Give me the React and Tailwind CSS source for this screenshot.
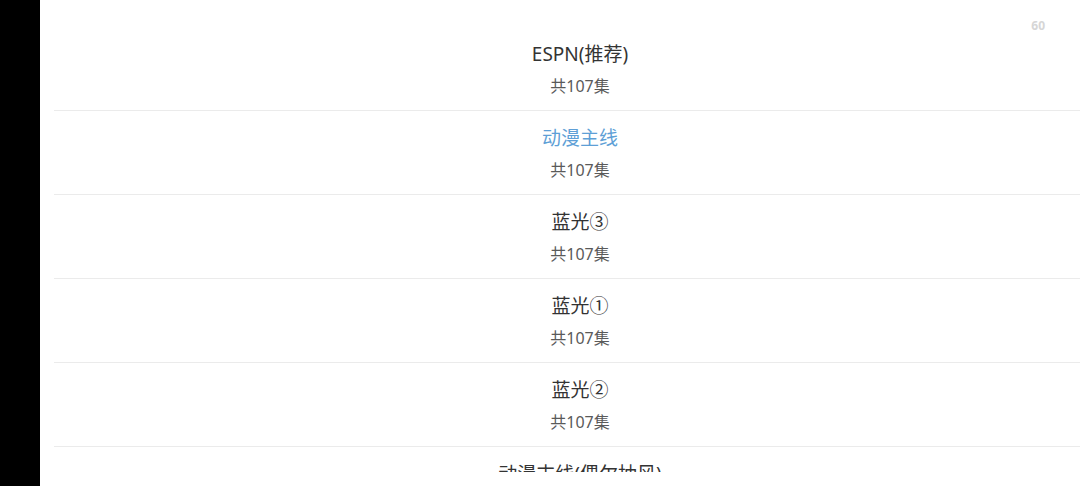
import React from "react";

const rows = [
  { title: "ESPN(推荐)", active: false },
  { title: "动漫主线", active: true },
  { title: "蓝光③", active: false },
  { title: "蓝光①", active: false },
  { title: "蓝光②", active: false },
  { title: "动漫支线(偶尔抽风)", active: false },
];

export default function App() {
  return (
    <div
      className="flex h-[486px] w-[1080px] overflow-hidden bg-black"
      style={{ fontFamily: '"Noto Sans", "Noto Sans CJK SC", sans-serif' }}
    >
      <div className="w-[40px] shrink-0 bg-black" />
      <div className="relative flex-1 bg-white">
        <div className="absolute right-[35px] top-[17px] text-[12px] font-bold text-[#d6d6d6]">60</div>
        <div className="h-[472px] overflow-hidden pl-[14px] pt-[27px]">
          {rows.map((r, i) => (
            <div
              key={i}
              className="flex h-[84px] flex-col items-center border-b border-[#ebebeb] pl-[26px] pt-[15px]"
            >
              <div
                className={`text-[19px] leading-[24px] ${r.active ? "text-[#5e9fd6]" : "text-[#333333]"}`}
              >
                {r.title}
              </div>
              <div className="mt-[10px] text-[16px] leading-[20px] text-[#5a5a5a]">共107集</div>
            </div>
          ))}
        </div>
      </div>
    </div>
  );
}
